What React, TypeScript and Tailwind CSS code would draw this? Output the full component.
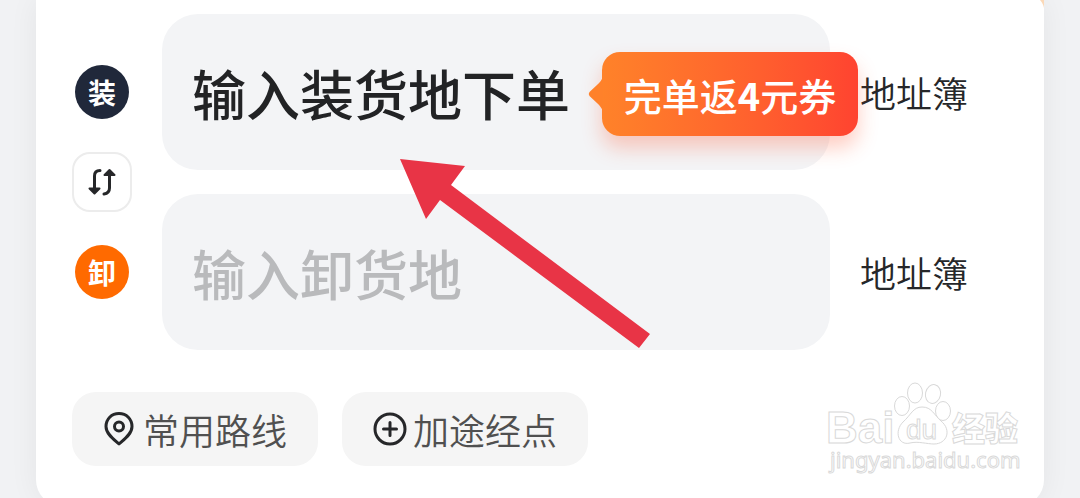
import React from 'react';

interface AddressFieldProps {
  id: string;
  label: string;
  placeholder: string;
  inputClass: string;
  children?: React.ReactNode;
}

const AddressField: React.FC<AddressFieldProps> = ({ id, label, placeholder, inputClass, children }) => (
  <div className="flex items-center gap-[30px]">
    <div className="relative min-w-0 flex-1">
      <input
        id={id}
        type="text"
        aria-label={label}
        placeholder={placeholder}
        className={`block h-[156px] w-full rounded-[36px] bg-[#f3f4f6] px-[30px] text-[54px] font-medium outline-none ${inputClass}`}
      />
      {children}
    </div>
    <a href="#address-book" className="shrink-0 text-4xl font-[350] text-[#262729]">
      地址簿
    </a>
  </div>
);

// Coupon bubble that hangs over the right end of the field
const PromoBubble = () => (
  <div className="absolute top-[38px] -right-7 flex h-[84px] w-64 items-center justify-center rounded-[18px] bg-linear-to-r from-[#ff8229] to-[#ff4330] text-[38px] font-medium text-white shadow-[0_12px_20px_rgba(255,80,40,0.28)]">
    <svg className="absolute top-6 -left-[14px]" width="15" height="36" viewBox="0 0 15 36" aria-hidden="true">
      <path d="M15 0C14 4 12 6 9 9L1.500 16Q0 18 1.500 20L9 27C12 30 14 32 15 36Z" fill="#ff812a" />
    </svg>
    <span className="whitespace-nowrap">
      完单返<b className="font-bold">4</b>元券
    </span>
  </div>
);

const SwapIcon = () => (
  <svg width="30" height="30" viewBox="0 0 30 30" fill="none" stroke="#262729" strokeWidth="3" strokeLinecap="round" aria-hidden="true">
    <path d="M13 3.500C9.500 3.500 7.500 5.500 7.500 9V22" />
    <path d="M2.500 21.500H12.500L7.500 26.500Z" fill="#262729" strokeWidth="2" strokeLinejoin="round" />
    <path d="M17 27C20.500 26.500 22.500 24.500 22.500 21V8" />
    <path d="M17.500 8H27.500L22.500 3Z" fill="#262729" strokeWidth="2" strokeLinejoin="round" />
  </svg>
);

const PinIcon = () => (
  <svg width="32" height="36" viewBox="0 0 32 36" fill="none" stroke="#262729" strokeWidth="3" strokeLinejoin="round" aria-hidden="true">
    <path d="M16 33C11 28.500 3 23 3 15.500C3 8 8.500 2.500 16 2.500S29 8 29 15.500C29 23 21 28.500 16 33Z" />
    <circle cx="16" cy="15.500" r="4.500" />
  </svg>
);

const PlusCircleIcon = () => (
  <svg width="36" height="36" viewBox="0 0 36 36" fill="none" stroke="#262729" strokeWidth="3" strokeLinecap="round" aria-hidden="true">
    <circle cx="17" cy="18" r="15" />
    <path d="M10.500 18H23.500M17 11.500V24.500" />
  </svg>
);

const chipClass =
  'flex h-[74px] items-center rounded-3xl bg-[#f5f5f5] px-[31px] text-4xl font-[350] text-[#505050] whitespace-nowrap';

const PointerArrow = () => (
  <svg className="pointer-events-none absolute top-[159px] left-[364px]" width="250" height="190" viewBox="0 0 250 190" aria-hidden="true">
    <path d="M0 0L65 7L51 26L250 175L239 189L40 41L26 60Z" fill="#e83446" />
  </svg>
);

// Edge of the banner that shows behind the card's top right corner
const BannerEdge = () => (
  <svg className="pointer-events-none absolute top-0 right-0" width="4" height="8" viewBox="0 0 4 8" aria-hidden="true">
    <path d="M0 0H4V8C3.500 5 2 2 0 0Z" fill="#fbd9b8" />
  </svg>
);

const Watermark = () => (
  <svg
    className="pointer-events-none absolute top-[380px] right-[18px]"
    width="202"
    height="100"
    viewBox="0 0 202 100"
    fill="#ffffff"
    stroke="#d9d9d9"
    strokeWidth="1"
    aria-hidden="true"
  >
    <text x="2" y="63" fontFamily="Liberation Sans" fontWeight="700" fontSize="44">Bai</text>
    <ellipse cx="78" cy="26" rx="7.500" ry="9.500" />
    <ellipse cx="91" cy="13" rx="7.500" ry="10" />
    <ellipse cx="109" cy="14" rx="7.500" ry="9.500" transform="rotate(12 109 14)" />
    <ellipse cx="119" cy="31" rx="7.500" ry="9.500" />
    <path d="M98 27C108 27 110 35 117 41C128 50 123 64 110 64C103 64 94 61 86 63C74 66 70 51 79 42C87 35 89 27 98 27Z" />
    <text x="82" y="59" fontFamily="Liberation Sans" fontSize="28">du</text>
    <text x="128" y="61" fontFamily="Noto Sans CJK SC" fontWeight="900" fontSize="33">经验</text>
    <text x="6" y="88" fontFamily="Noto Sans" fontSize="22">jingyan.baidu.com</text>
  </svg>
);

export default function App() {
  return (
    <main className="h-screen overflow-hidden bg-[#f1f2f4] px-9 font-['Noto_Sans_CJK_SC',sans-serif]">
      <form className="relative rounded-b-[26px] bg-white pt-[14px] pr-[76px] pb-10 pl-9 shadow-[0_0_30px_rgba(0,0,0,0.06)]">
        <div className="flex gap-[30px]">
          <div className="flex w-[60px] shrink-0 flex-col items-center justify-center gap-[33px] text-[28px] font-bold text-white">
            <label htmlFor="load" className="flex size-[54px] items-center justify-center rounded-full bg-[#20283a]">
              装
            </label>
            <button
              type="button"
              aria-label="交换地址"
              className="flex size-[60px] items-center justify-center rounded-[18px] border-2 border-[#ececec] bg-white"
            >
              <SwapIcon />
            </button>
            <label htmlFor="unload" className="flex size-[54px] items-center justify-center rounded-full bg-[#ff6a00]">
              卸
            </label>
          </div>

          <div className="flex min-w-0 flex-1 flex-col gap-6">
            <AddressField id="load" label="装货地" placeholder="输入装货地下单" inputClass="placeholder:text-[#222325]">
              <PromoBubble />
            </AddressField>
            <AddressField id="unload" label="卸货地" placeholder="输入卸货地" inputClass="placeholder:text-[#b9babc]" />
          </div>
        </div>

        <div className="mt-[42px] flex gap-6">
          <button type="button" className={`${chipClass} gap-2`}>
            <PinIcon />
            <span>常用路线</span>
          </button>
          <button type="button" className={`${chipClass} gap-1`}>
            <PlusCircleIcon />
            <span>加途经点</span>
          </button>
        </div>

        <PointerArrow />
        <BannerEdge />
        <Watermark />
      </form>
    </main>
  );
}
